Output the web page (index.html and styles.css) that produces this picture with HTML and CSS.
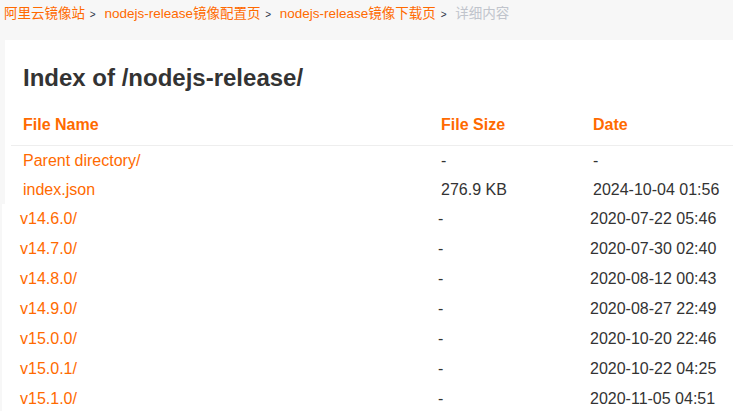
FILE: index.html
```html
<!DOCTYPE html>
<html lang="zh-CN">
<head>
    <meta charset="UTF-8">
    <meta name="viewport" content="width=device-width, initial-scale=1.0">
    <title>Index of /nodejs-release/</title>
    <link rel="stylesheet" href="styles.css">
</head>
<body>
    <div class="crumbs">
        <a class="crumb" href="#">阿里云镜像站</a>
        <span class="sep">&gt;</span>
        <a class="crumb" href="#">nodejs-release镜像配置页</a>
        <span class="sep">&gt;</span>
        <a class="crumb" href="#">nodejs-release镜像下载页</a>
        <span class="sep">&gt;</span>
        <span class="crumb current">详细内容</span>
    </div>

    <div class="card">
        <h1>Index of /nodejs-release/</h1>
        <table class="listing">
            <tr class="head">
                <th class="col-name">File Name</th>
                <th class="col-size">File Size</th>
                <th class="col-date">Date</th>
            </tr>
            <tr class="short">
                <td><a href="#">Parent directory/</a></td>
                <td>-</td>
                <td>-</td>
            </tr>
            <tr class="short">
                <td><a href="#">index.json</a></td>
                <td>276.9 KB</td>
                <td>2024-10-04 01:56</td>
            </tr>
        </table>
    </div>

    <div class="card more">
        <table class="listing">
            <tr><td class="col-name"><a href="#">v14.6.0/</a></td><td class="col-size">-</td><td class="col-date">2020-07-22 05:46</td></tr>
            <tr><td><a href="#">v14.7.0/</a></td><td>-</td><td>2020-07-30 02:40</td></tr>
            <tr><td><a href="#">v14.8.0/</a></td><td>-</td><td>2020-08-12 00:43</td></tr>
            <tr><td><a href="#">v14.9.0/</a></td><td>-</td><td>2020-08-27 22:49</td></tr>
            <tr><td><a href="#">v15.0.0/</a></td><td>-</td><td>2020-10-20 22:46</td></tr>
            <tr><td><a href="#">v15.0.1/</a></td><td>-</td><td>2020-10-22 04:25</td></tr>
            <tr><td><a href="#">v15.1.0/</a></td><td>-</td><td>2020-11-05 04:51</td></tr>
        </table>
    </div>
</body>
</html>
```

FILE: styles.css
```css
body {
    margin: 0;
    background-color: #f7f7f7;
    font-family: "Liberation Sans", Arial, "Noto Sans CJK SC", sans-serif;
    color: #333;
}
a {
    color: #ff6a00;
    text-decoration: none;
}
.crumbs {
    height: 40px;
    padding: 4px 0 0 4px;
    box-sizing: border-box;
    font-size: 13.5px;
    line-height: 20px;
    white-space: nowrap;
}
.crumb {
    color: #ff6a00;
}
.current {
    color: #c0c4cc;
}
.sep {
    font-size: 10px;
    color: #2a2f45;
    margin: 0 5px 0 1px;
}
.card {
    margin-left: 5px;
    background-color: #fff;
    padding: 24px 0 0 6px;
}
.more {
    margin-left: 2px;
    padding-top: 0;
}
h1 {
    margin: 0 0 13px 12px;
    font-size: 24px;
    line-height: 28px;
    color: #333;
}
.listing {
    width: 100%;
    border-collapse: collapse;
    font-size: 16px;
}
.listing th,
.listing td {
    padding: 0 12px;
    text-align: left;
    white-space: nowrap;
}
.listing td {
    height: 30px;
}
.head th {
    height: 40px;
    color: #ff6a00;
    border-bottom: 1px solid #eee;
}
.short td {
    height: 29px;
}
.col-name {
    width: 394px;
}
.col-size {
    width: 128px;
}
```
